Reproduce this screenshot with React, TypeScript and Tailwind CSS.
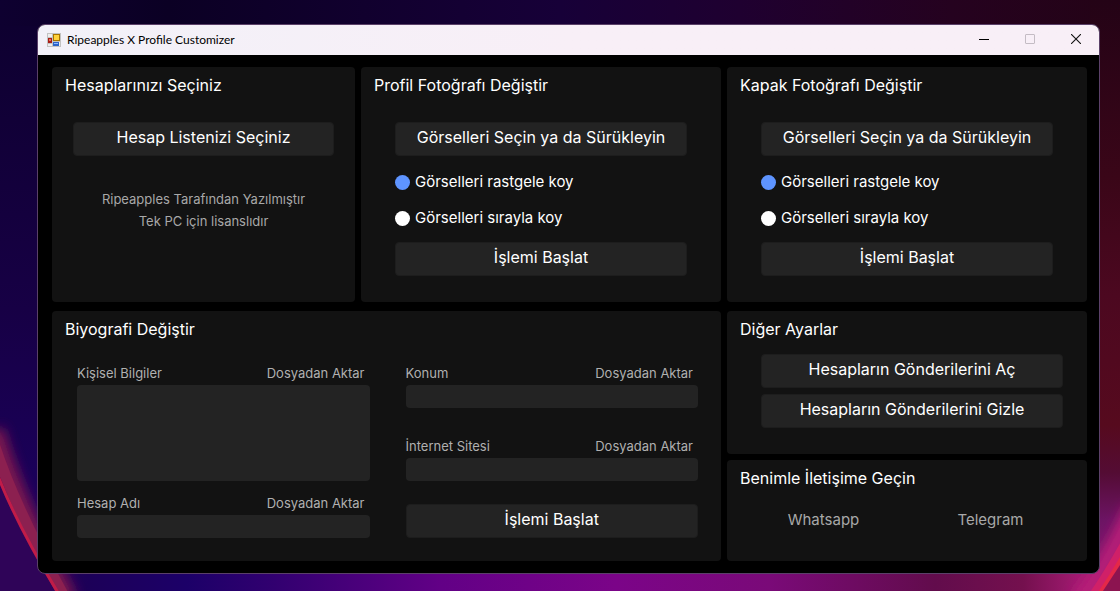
import { useState } from "react";
import type { ReactNode } from "react";

function Panel({ title, className = "", children }: { title: string; className?: string; children: ReactNode }) {
  return (
    <section className={`flex flex-col rounded bg-[#121212] px-[13px] pt-1.5 ${className}`}>
      <h2 className="text-base leading-6 text-white">{title}</h2>
      {children}
    </section>
  );
}

function ActionButton({ children }: { children: ReactNode }) {
  return (
    <button type="button" className="h-[34px] w-full rounded border border-[#1d1d1d] bg-[#232323] pb-1 text-base leading-6 text-white hover:bg-[#2d2d2d]">
      {children}
    </button>
  );
}

function ImageOptions({ name }: { name: string }) {
  const [mode, setMode] = useState("rastgele");
  const options = [
    { value: "rastgele", label: "Görselleri rastgele koy" },
    { value: "sirayla", label: "Görselleri sırayla koy" },
  ];

  return (
    <div className="mt-[25px] px-[21px]">
      <ActionButton>Görselleri Seçin ya da Sürükleyin</ActionButton>
      <div className="mt-3.5 mb-3 flex flex-col gap-3">
        {options.map(o => (
          <label key={o.value} className="flex items-center gap-[5px] text-[15px] leading-6 text-white">
            <input
              type="radio"
              name={name}
              value={o.value}
              checked={mode === o.value}
              onChange={() => setMode(o.value)}
              className="size-[15px] appearance-none rounded-full bg-white checked:bg-[#5e94ff]"
            />
            {o.label}
          </label>
        ))}
      </div>
      <ActionButton>İşlemi Başlat</ActionButton>
    </div>
  );
}

function Field({ id, label, multiline = false }: { id: string; label: string; multiline?: boolean }) {
  const box = "block w-full rounded bg-[#232323] px-2 text-[13px] text-white outline-none";
  return (
    <div>
      <div className="flex justify-between pr-[5px] text-[13px] leading-6 text-[#b0b0b0]">
        <label htmlFor={id}>{label}</label>
        <button type="button" className="hover:text-white">Dosyadan Aktar</button>
      </div>
      {multiline ? <textarea id={id} className={`${box} h-24 resize-none`} /> : <input id={id} type="text" className={`${box} h-[23px]`} />}
    </div>
  );
}

function Wallpaper() {
  return (
    <svg className="absolute inset-0 size-full" viewBox="0 0 1120 591" preserveAspectRatio="none" aria-hidden="true">
      <defs>
        <linearGradient id="top" x1="0" x2="1" y1="0" y2="0">
          <stop offset="0" stopColor="#0e0030" />
          <stop offset="0.15" stopColor="#0b0024" />
          <stop offset="0.5" stopColor="#170038" />
          <stop offset="0.66" stopColor="#1f0030" />
          <stop offset="0.85" stopColor="#25021f" />
          <stop offset="1" stopColor="#240316" />
        </linearGradient>
        <linearGradient id="left" x1="0" x2="0" y1="0" y2="1">
          <stop offset="0" stopColor="#0e0030" />
          <stop offset="0.5" stopColor="#170045" />
          <stop offset="1" stopColor="#1c0066" />
        </linearGradient>
        <linearGradient id="right" x1="0" x2="0" y1="0" y2="1">
          <stop offset="0" stopColor="#240316" />
          <stop offset="0.3" stopColor="#3a0618" />
          <stop offset="0.5" stopColor="#4c0820" />
          <stop offset="0.72" stopColor="#560a1e" />
          <stop offset="0.8" stopColor="#540c34" />
          <stop offset="0.88" stopColor="#6c1464" />
          <stop offset="1" stopColor="#8a1a72" />
        </linearGradient>
        <linearGradient id="bottom" x1="0" x2="1" y1="0" y2="0">
          <stop offset="0" stopColor="#2c0458" />
          <stop offset="0.08" stopColor="#1c0058" />
          <stop offset="0.17" stopColor="#1c0068" />
          <stop offset="0.25" stopColor="#320070" />
          <stop offset="0.4" stopColor="#620086" />
          <stop offset="0.56" stopColor="#7b0488" />
          <stop offset="0.7" stopColor="#7a0a78" />
          <stop offset="0.85" stopColor="#620c4c" />
          <stop offset="0.93" stopColor="#74104e" />
          <stop offset="0.98" stopColor="#a01a70" />
        </linearGradient>
        <filter id="soft" x="-50%" y="-50%" width="200%" height="200%">
          <feGaussianBlur stdDeviation="6" />
        </filter>
      </defs>
      <rect width="1120" height="591" fill="url(#top)" />
      <rect y="26" width="560" height="565" fill="url(#left)" />
      <rect x="1090" y="0" width="30" height="591" fill="url(#right)" />
      <rect y="566" width="1100" height="25" fill="url(#bottom)" />
      <path d="M-6 430 Q14 500 68 600" stroke="#7a1850" strokeWidth="20" fill="none" filter="url(#soft)" />
      <path d="M-6 444 Q14 506 66 600" stroke="#8c2050" strokeWidth="11" fill="none" />
      <path d="M-2 480 Q18 530 58 596 L-4 596Z" fill="#2f0458" />
      <path d="M-2 476 Q18 527 60 596" stroke="#c01c48" strokeWidth="3" fill="none" />
      <path d="M1078 602 Q1106 568 1134 508" stroke="#b81c78" strokeWidth="18" fill="none" filter="url(#soft)" />
      <path d="M1090 600 Q1108 575 1128 538" stroke="#d02068" strokeWidth="9" fill="none" />
      <path d="M1096 600 Q1112 578 1128 549" stroke="#e42848" strokeWidth="6" fill="none" />
      <path d="M1101 594 L1122 562 V594Z" fill="#8c1450" />
    </svg>
  );
}

function AppIcon() {
  return (
    <svg width="14" height="14" viewBox="0 0 14 14" aria-hidden="true" shapeRendering="crispEdges">
      <rect width="14" height="14" fill="#c2c2c2" />
      <path d="M1 1h4v3H1zM1 11h4v2H1zM12 9h1v4h-1z" fill="#eeeeee" />
      <rect x="6" y="1" width="7" height="7" fill="#a87400" />
      <rect x="7" y="2" width="5" height="5" fill="#ffd23c" />
      <rect x="1" y="5" width="4" height="5" fill="#a81c14" />
      <rect x="2" y="6" width="2" height="2" fill="#e8705c" />
      <rect x="6" y="9" width="6" height="4" fill="#2c62c8" />
      <rect x="7" y="10" width="4" height="1" fill="#8cb8ff" />
    </svg>
  );
}

function TitleBar() {
  const button = "flex h-full w-[46px] items-center justify-center pb-0.5";
  return (
    <header className="flex h-[30px] items-center bg-linear-to-r from-[#f2f1f8] via-[#f8eff7] to-[#f8eff7] pl-[9px] text-black">
      <AppIcon />
      <h1 className="ml-1.5 flex-1 font-[Lato,sans-serif] text-xs">Ripeapples X Profile Customizer</h1>
      <button type="button" aria-label="Simge durumuna küçült" className={button}>
        <svg width="10" height="10" viewBox="0 0 10 10"><path d="M0 5.5h10" stroke="#000" /></svg>
      </button>
      <button type="button" aria-label="Ekranı kapla" disabled className={button}>
        <svg width="10" height="10" viewBox="0 0 10 10"><rect x="0.5" y="0.5" width="9" height="9" rx="0.5" fill="none" stroke="#c4bcc4" /></svg>
      </button>
      <button type="button" aria-label="Kapat" className={button}>
        <svg width="10" height="10" viewBox="0 0 10 10"><path d="M0 0l10 10M10 0L0 10" stroke="#111" strokeWidth="1.1" /></svg>
      </button>
    </header>
  );
}

export default function App() {
  return (
    <div className="relative min-h-screen overflow-hidden bg-[#1c0040] pt-6 pr-5 pb-[17px] pl-[37px] font-[Inter,sans-serif]">
      <Wallpaper />
      <div className="relative overflow-hidden rounded-lg border border-[#5a4068] bg-black">
        <TitleBar />
        <main className="flex flex-col gap-[9px] pt-3 pr-3 pb-3 pl-3.5">
          <div className="grid grid-cols-[303fr_360fr_360fr] gap-1.5">
            <Panel title="Hesaplarınızı Seçiniz">
              <div className="mt-[25px] px-2">
                <ActionButton>Hesap Listenizi Seçiniz</ActionButton>
              </div>
              <p className="mt-8 text-center text-[13px] leading-[22px] text-[#a8a8a8]">
                Ripeapples Tarafından Yazılmıştır
                <br />
                Tek PC için lisanslıdır
              </p>
            </Panel>
            <Panel title="Profil Fotoğrafı Değiştir" className="pb-[26px]">
              <ImageOptions name="profil" />
            </Panel>
            <Panel title="Kapak Fotoğrafı Değiştir" className="pb-[26px]">
              <ImageOptions name="kapak" />
            </Panel>
          </div>

          <div className="grid grid-cols-[669fr_360fr] gap-1.5">
            <Panel title="Biyografi Değiştir" className="pb-[23px]">
              <div className="mt-5 grid grid-cols-2 gap-9 pr-2.5 pl-3">
                <div className="flex flex-col gap-2.5">
                  <Field id="bilgi" label="Kişisel Bilgiler" multiline />
                  <Field id="ad" label="Hesap Adı" />
                </div>
                <div className="flex flex-col">
                  <Field id="konum" label="Konum" />
                  <div className="mt-[26px] mb-[23px]">
                    <Field id="site" label="İnternet Sitesi" />
                  </div>
                  <ActionButton>İşlemi Başlat</ActionButton>
                </div>
              </div>
            </Panel>
            <div className="flex flex-col gap-1.5">
              <Panel title="Diğer Ayarlar" className="pb-[26px]">
                <div className="mt-[13px] flex flex-col gap-1.5 pr-[11px] pl-[21px]">
                  <ActionButton>Hesapların Gönderilerini Aç</ActionButton>
                  <ActionButton>Hesapların Gönderilerini Gizle</ActionButton>
                </div>
              </Panel>
              <Panel title="Benimle İletişime Geçin" className="flex-1">
                <nav className="mt-[18px] grid grid-cols-2 text-center text-[15px] leading-6 text-[#a8a8a8]">
                  <a href="#whatsapp">Whatsapp</a>
                  <a href="#telegram">Telegram</a>
                </nav>
              </Panel>
            </div>
          </div>
        </main>
      </div>
    </div>
  );
}
